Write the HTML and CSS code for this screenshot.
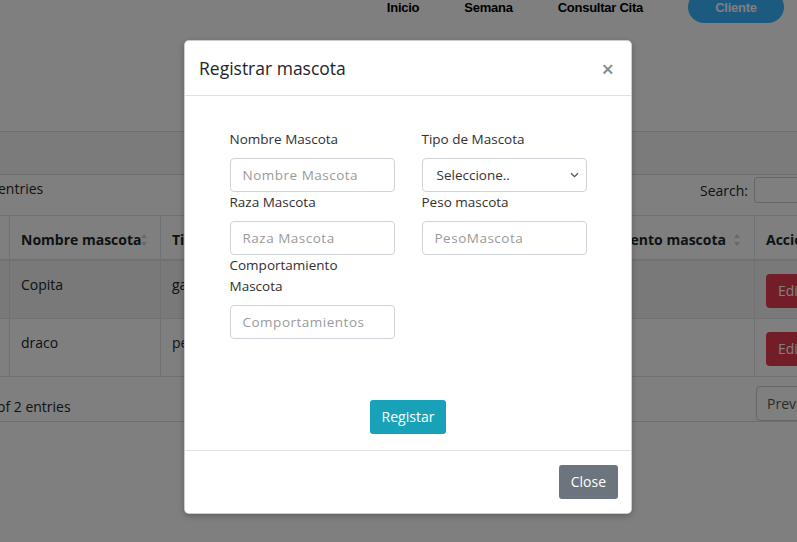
FILE: index.html
```html
<!DOCTYPE html>
<html lang="es">
<head>
<meta charset="utf-8">
<title>Mascotas</title>
<link rel="stylesheet" href="styles.css">
</head>
<body>
<div class="page">
  <nav class="topnav">
    <a class="nav-link">Inicio</a>
    <a class="nav-link">Semana</a>
    <a class="nav-link">Consultar Cita</a>
    <a class="nav-btn">Cliente</a>
  </nav>

  <section class="card">
    <div class="card-header"></div>
    <div class="card-body">
      <div class="dt-top">
        <span class="dt-length">entries</span>
        <label class="dt-search">Search: <span class="search-box"></span></label>
      </div>
      <table class="dt">
        <colgroup>
          <col class="c0"><col class="c1"><col class="c2"><col class="c3"><col class="c4"><col class="c5"><col class="c6">
        </colgroup>
        <thead>
          <tr>
            <th></th>
            <th><span class="th-in">Nombre mascota <i class="sort"></i></span></th>
            <th>Tipo mascota</th>
            <th>Raza mascota</th>
            <th>Peso</th>
            <th><span class="th-in th-right">Comportamiento mascota <i class="sort"></i></span></th>
            <th>Acciones</th>
          </tr>
        </thead>
        <tbody>
          <tr class="odd">
            <td></td><td>Copita</td><td>gato</td><td></td><td></td><td></td>
            <td><span class="btn-edit">Editar</span></td>
          </tr>
          <tr>
            <td></td><td>draco</td><td>perro</td><td></td><td></td><td></td>
            <td><span class="btn-edit">Editar</span></td>
          </tr>
        </tbody>
      </table>
      <div class="dt-bottom">
        <span class="dt-info">of 2 entries</span>
        <span class="page-btn">Previous</span>
      </div>
    </div>
  </section>
</div>

<div class="backdrop"></div>

<div class="modal">
  <div class="modal-header">
    <h5 class="modal-title">Registrar mascota</h5>
    <span class="close">&times;</span>
  </div>
  <div class="modal-body">
    <form class="form">
      <div class="form-grid">
        <div class="field">
          <label>Nombre Mascota</label>
          <input class="control" placeholder="Nombre Mascota">
        </div>
        <div class="field">
          <label>Tipo de Mascota</label>
          <div class="control select">
            <span>Seleccione..</span>
            <svg width="9" height="6" viewBox="0 0 9 6"><path d="M1 1.2l3.5 3.5 3.5-3.5" fill="none" stroke="#555" stroke-width="1.3"/></svg>
          </div>
        </div>
        <div class="field">
          <label>Raza Mascota</label>
          <input class="control" placeholder="Raza Mascota">
        </div>
        <div class="field">
          <label>Peso mascota</label>
          <input class="control" placeholder="PesoMascota">
        </div>
        <div class="field">
          <label class="narrow">Comportamiento Mascota</label>
          <input class="control" placeholder="Comportamientos">
        </div>
      </div>
      <div class="actions">
        <button type="button" class="btn btn-info">Registar</button>
      </div>
    </form>
  </div>
  <div class="modal-footer">
    <button type="button" class="btn btn-secondary">Close</button>
  </div>
</div>
</body>
</html>
```

FILE: styles.css
```css
* { box-sizing: border-box; }
html, body { margin: 0; padding: 0; }
body {
  width: 797px;
  height: 542px;
  overflow: hidden;
  background: #fff;
  font-family: "Open Sans", "Noto Sans", sans-serif;
  color: #212529;
  position: relative;
}

/* ---------- page behind the modal ---------- */
.page { width: 797px; }

.topnav {
  display: flex;
  justify-content: flex-end;
  align-items: center;
  gap: 45px;
  margin-top: -9px;
  padding-right: 13px;
  height: 32px;
  font-family: "Liberation Sans Narrow", "Liberation Sans", sans-serif;
  font-weight: bold;
  font-size: 13px;
  letter-spacing: -.25px;
  color: #000;
}
.nav-link { color: #000; }
.nav-btn {
  width: 96px;
  height: 32px;
  border-radius: 16px;
  background: #3ab4ff;
  color: #fff;
  display: flex;
  align-items: center;
  justify-content: center;
}

.card {
  margin-top: 108px;
  border-top: 1px solid #dcdcdc;
}
.card-header {
  height: 43px;
  background: #f6f6f6;
  border-bottom: 1px solid #dcdcdc;
}
.card-body { font-size: 14px; }

.dt-top {
  height: 40px;
  display: flex;
  justify-content: space-between;
  align-items: flex-start;
  padding-top: 2px;
}
.dt-length { margin-left: -2px; line-height: 21px; margin-top: 1px; }
.dt-search { display: flex; align-items: center; gap: 6px; line-height: 21px; }
.search-box {
  width: 60px;
  height: 26px;
  margin-right: -17px;
  border: 1px solid #ccc;
  border-radius: 3px;
  background: #fff;
}

.dt {
  border-collapse: collapse;
  table-layout: fixed;
  width: 900px;
  margin-left: -40px;
  font-size: 14px;
}
.c0 { width: 49px; }
.c1 { width: 151px; }
.c2 { width: 150px; }
.c3 { width: 130px; }
.c4 { width: 110px; }
.c5 { width: 204px; }
.c6 { width: 106px; }
.dt th, .dt td {
  border: 1px solid #dee2e6;
  padding: 13px 11px 10px;
  text-align: left;
  vertical-align: top;
  line-height: 21px;
  white-space: nowrap;
  overflow: hidden;
}
.dt thead th {
  font-weight: bold;
  border-bottom: 2px solid #dee2e6;
  padding: 13px 11px 9px;
}
.dt tr.odd td { background: #f2f2f2; }
.th-in { display: flex; justify-content: space-between; align-items: center; }
.th-right { justify-content: flex-end; gap: 8px; }
.sort {
  display: inline-block;
  width: 6px;
  height: 12px;
  position: relative;
  opacity: .18;
  margin-right: 3px;
  flex: none;
}
.sort::before, .sort::after {
  content: "";
  position: absolute;
  left: 0;
  border-left: 3px solid transparent;
  border-right: 3px solid transparent;
}
.sort::before { top: 0; border-bottom: 4px solid #000; }
.sort::after { bottom: 0; border-top: 4px solid #000; }
.btn-edit {
  display: inline-block;
  padding: 6px 12px;
  line-height: 22px;
  border-radius: 4px;
  background: #e63a52;
  color: #fff;
}

.dt-bottom {
  height: 45px;
  display: flex;
  justify-content: space-between;
  align-items: flex-start;
  border-bottom: 1px solid #dcdcdc;
}
.dt-info { margin-left: -3px; margin-top: 19px; line-height: 21px; }
.page-btn {
  margin-top: 9px;
  margin-right: -40px;
  padding: 6px 10px;
  border: 1px solid #ccc;
  border-radius: 4px;
  color: #555;
  line-height: 21px;
  width: 81px;
}

/* ---------- backdrop ---------- */
.backdrop {
  position: absolute;
  inset: 0;
  background: rgba(0,0,0,.5);
}

/* ---------- modal ---------- */
.modal {
  position: absolute;
  left: 184px;
  top: 40px;
  width: 448px;
  background: #fff;
  border: 1px solid rgba(0,0,0,.2);
  border-radius: 5px;
  box-shadow: 0 2px 6px rgba(0,0,0,.25);
}
.modal-header {
  display: flex;
  align-items: center;
  justify-content: space-between;
  padding: 16px 16px 16px 14px;
  border-bottom: 1px solid #dee2e6;
}
.modal-title {
  margin: 0;
  font-size: 17.5px;
  font-weight: 400;
  line-height: 22px;
  color: #212529;
}
.close {
  font-size: 22px;
  line-height: 22px;
  color: #8a8a8a;
  font-weight: 600;
  margin-right: 1px;
}

.modal-body { padding: 16px; }
.form { padding-top: 17px; }
.form-grid {
  display: grid;
  grid-template-columns: 165px 165px;
  column-gap: 27px;
  justify-content: center;
}
.field { display: flex; flex-direction: column; }
.field label {
  font-size: 13.5px;
  line-height: 21px;
  margin-bottom: 8px;
  color: #303030;
}
.field label.narrow { max-width: 150px; }
.control {
  height: 34px;
  width: 165px;
  border: 1px solid #ced4da;
  border-radius: 4px;
  padding: 0 12px;
  font-family: inherit;
  font-size: 13.5px;
  letter-spacing: .5px;
  color: #495057;
  background: #fff;
}
.control::placeholder { color: #9a9a9a; }
.select {
  display: flex;
  align-items: center;
  justify-content: space-between;
  padding: 0 7px 0 14px;
  color: #333;
  letter-spacing: 0;
}

.actions {
  display: flex;
  justify-content: center;
  margin-top: 61px;
}
.btn {
  font-family: inherit;
  font-size: 14px;
  line-height: 22px;
  border: 0;
  border-radius: 3px;
  padding: 6px 12px;
  color: #fff;
}
.btn-info { background: #17a2b8; }
.btn-secondary { background: #6c757d; }

.modal-footer {
  display: flex;
  justify-content: flex-end;
  padding: 14px 13px 14px;
  border-top: 1px solid #dee2e6;
}
```
